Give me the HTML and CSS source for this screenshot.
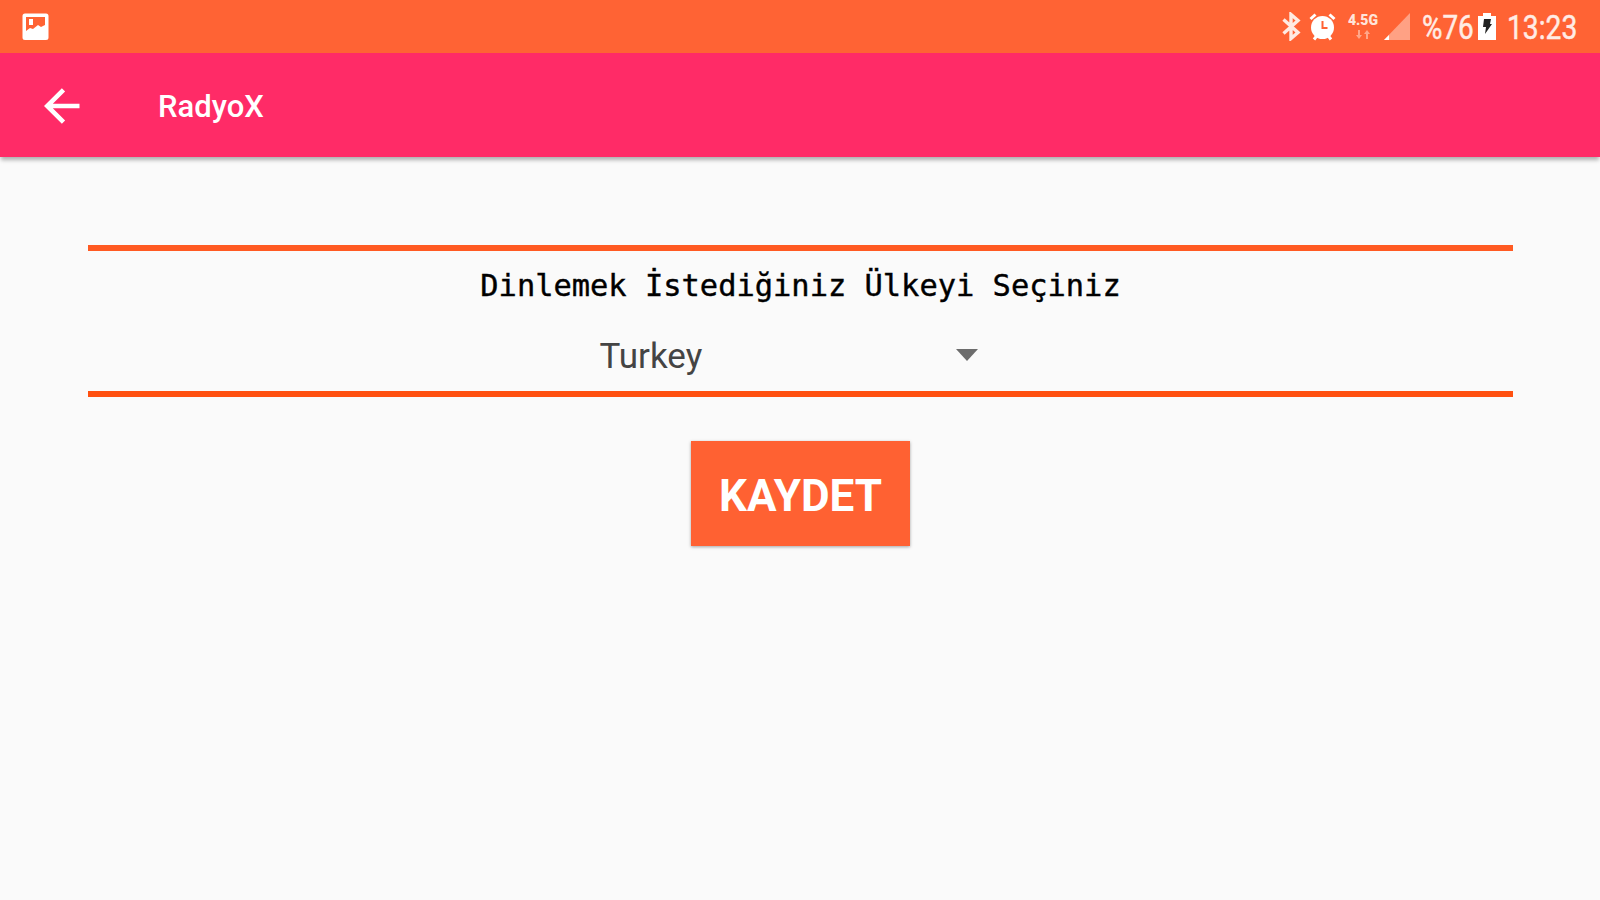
FILE: index.html
```
<!DOCTYPE html>
<html lang="tr">
<head>
    <meta charset="UTF-8">
    <meta name="viewport" content="width=device-width, initial-scale=1.0">
    <title>RadyoX</title>
    <link rel="stylesheet" href="styles.css">
</head>
<body>
    <div class="status-bar">
        <svg class="icon-picture" width="27" height="28" viewBox="0 0 27 28">
            <path fill="#fff" fill-rule="evenodd" d="M3 0.5h21q2.5 0 2.5 2.5v21.500q0 2.500-2.500 2.500H3q-2.500 0-2.500-2.500V3Q0.500 0.500 3 0.500zM4 4v14l4-3 3 1 5-4 3 2 4-2V4z"/>
            <path fill="#fff" d="M7 6h4v6H7z"/>
        </svg>
        <div class="status-right">
            <svg class="icon-bluetooth" width="20" height="29" viewBox="0 0 20 29">
                <path fill="none" stroke="#ffeae2" stroke-width="3.400" d="M2.500 7.500L17 20.500l-7 6V2.500l7 6L2.500 21.500"/>
            </svg>
            <svg class="icon-alarm" width="27" height="28" viewBox="0 0 27 28">
                <path fill="none" stroke="#fff" stroke-width="3" d="M1.500 6l5-4.500M25.500 6l-5-4.500M5 26.500l3-4M22 26.500l-3-4"/>
                <circle cx="13.500" cy="14.500" r="11.500" fill="#fff"/>
                <path fill="none" stroke="#ff6334" stroke-width="2" d="M13.500 8v7h5"/>
            </svg>
            <div class="network">
                <span class="network-type">4.5G</span>
                <svg width="16" height="9" viewBox="0 0 16 9">
                    <path fill="#ffa78a" d="M3 0h2v5h2l-3 4-3-4h2zM11 9h2V4h2l-3-4-3 4h2z"/>
                </svg>
            </div>
            <svg class="icon-signal" width="27" height="28" viewBox="0 0 27 28">
                <path fill="#ffa184" d="M26 0v27H0z"/>
                <path fill="#fff" d="M5 22v5H0z"/>
            </svg>
            <span class="percent"><span>%76</span></span>
            <svg class="icon-battery" width="18" height="27" viewBox="0 0 18 27">
                <path fill="#fff" d="M5 0h8v3h5v24H0V3h5z"/>
                <path fill="#222" d="M6 6h7l-1 5h2L7 21l1-7H5z"/>
            </svg>
            <span class="clock"><span>13:23</span></span>
        </div>
    </div>

    <div class="toolbar">
        <svg class="icon-back" width="36" height="36" viewBox="0 0 36 36">
            <path fill="none" stroke="#fff" stroke-width="4.600" d="M35.500 18H4M19.500 1.800L3.200 18l16.300 16.200"/>
        </svg>
        <h1>RadyoX</h1>
    </div>

    <div class="content">
        <div class="country">
            <p class="label">Dinlemek İstediğiniz Ülkeyi Seçiniz</p>
            <div class="spinner">
                <span>Turkey</span>
                <svg width="22" height="12" viewBox="0 0 22 12">
                    <path fill="#6c6c6c" d="M0 0h22L11 12z"/>
                </svg>
            </div>
        </div>
        <button class="save">KAYDET</button>
    </div>
</body>
</html>
```

FILE: styles.css
```
body {
    font-family: Roboto, sans-serif;
    margin: 0;
    height: 900px;
    background-color: #fafafa;
    color: #000;
    overflow: hidden;
}
.status-bar {
    box-sizing: border-box;
    height: 53px;
    padding: 0 23px 0 22px;
    display: flex;
    justify-content: space-between;
    align-items: center;
    background-color: #ff6334;
    color: #ffece5;
}
.status-right {
    height: 53px;
    display: flex;
    align-items: center;
}
.icon-alarm {
    margin-left: 8px;
}
.network {
    width: 32px;
    margin-left: 11px;
    display: flex;
    flex-direction: column;
    align-items: center;
    gap: 3px;
}
.network-type {
    font-size: 14px;
    font-weight: 900;
    line-height: 13px;
    color: #ffe4da;
}
.icon-signal {
    margin-left: 5px;
}
.percent, .clock {
    font-size: 34px;
    line-height: 53px;
    height: 51px;
    white-space: nowrap;
    -webkit-text-stroke: 0.5px #ffece5;
}
.percent span, .clock span {
    display: inline-block;
    transform-origin: left;
}
.percent {
    width: 52px;
    margin-left: 11px;
}
.percent span {
    transform: scaleX(0.82);
}
.icon-battery {
    margin-left: 4px;
}
.clock {
    width: 70px;
    margin-left: 11px;
}
.clock span {
    transform: scaleX(0.83);
}
.toolbar {
    box-sizing: border-box;
    height: 104px;
    padding-left: 44px;
    display: flex;
    align-items: center;
    background-color: #ff2b67;
    box-shadow: 0 4px 4px -1px rgba(0, 0, 0, 0.3);
}
.icon-back {
    margin-top: 2px;
}
.toolbar h1 {
    margin: 3px 0 0 78px;
    font-size: 31px;
    font-weight: 500;
    color: #fff;
}
.content {
    padding: 88px 87px 0 88px;
    display: flex;
    flex-direction: column;
    align-items: center;
}
.country {
    box-sizing: border-box;
    width: 100%;
    height: 152px;
    border-top: 6px solid #ff5a22;
    border-bottom: 6px solid #ff5010;
    display: flex;
    flex-direction: column;
    align-items: center;
}
.label {
    margin: 17px 0 0;
    font-family: "DejaVu Sans Mono", monospace;
    font-size: 30.4px;
    line-height: 36px;
    -webkit-text-stroke: 0.4px #000;
}
.spinner {
    width: 378px;
    margin-top: 29px;
    padding-right: 24px;
    display: flex;
    justify-content: space-between;
    align-items: center;
    font-size: 35px;
    line-height: 44px;
    color: #444;
}
.spinner span {
    padding-top: 2px;
}
.spinner svg {
    margin-bottom: 2px;
}
.save {
    width: 219px;
    height: 105px;
    margin-top: 44px;
    padding: 4px 0 0;
    border: none;
    background-color: #ff6132;
    box-shadow: 0 1px 3px rgba(0, 0, 0, 0.35);
    font-family: Roboto, sans-serif;
    font-size: 44px;
    font-weight: 700;
    color: #fff;
}
```
